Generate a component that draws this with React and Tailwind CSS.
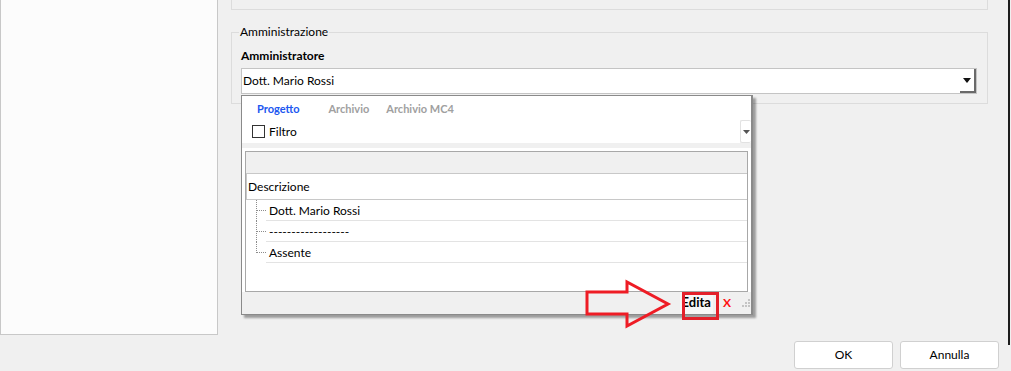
import React from 'react';

const rows = ['Dott. Mario Rossi', '------------------', 'Assente'];

function TreeLink({ last }) {
  return (
    <svg width="20" height="21" className="shrink-0">
      <line x1="10.5" y1="0" x2="10.5" y2={last ? 11 : 21} stroke="#8c8c8c" strokeDasharray="1 1" />
      <line x1="11" y1="10.5" x2="20" y2="10.5" stroke="#8c8c8c" strokeDasharray="1 1" />
    </svg>
  );
}

function DropdownPopup() {
  return (
    <div className="absolute left-[241px] top-[95px] flex h-[220px] w-[512px] flex-col border border-r-2 border-[#8a8a8a] bg-white shadow-[3px_3px_2px_rgba(0,0,0,0.35)]">
      {/* tabs + filter */}
      <div className="flex h-[47px] flex-col">
        <div className="flex h-[24px] items-center gap-[29px] pl-[15px] pt-[3px] text-[11px] font-bold">
          <span className="text-[#2057f0]">Progetto</span>
          <span className="flex gap-[17px] text-[#a0a0a0]">
            <span>Archivio</span>
            <span>Archivio MC4</span>
          </span>
        </div>
        <div className="flex flex-1 items-stretch">
          <div className="flex flex-1 items-center gap-[4px] pl-[10px]">
            <span className="h-[13px] w-[13px] border border-[#333] bg-white" />
            <span className="text-[12px]">Filtro</span>
          </div>
          <div className="flex w-[11px] items-center justify-center rounded-[2px] border border-r-0 border-[#e2e2e2]">
            <svg width="7" height="4" viewBox="0 0 7 4">
              <polygon points="0,0 7,0 3.5,4" fill="#555" />
            </svg>
          </div>
        </div>
      </div>
      <div className="h-[5px] bg-[#f0f0f0]" />
      {/* grid */}
      <div className="flex flex-1 flex-col bg-white px-[3px] pt-[3px]">
        <div className="flex flex-1 flex-col border border-[#a8a8a8]">
          <div className="h-[22px] border-b border-[#c8c8c8] bg-[#f0f0f0]" />
          <div className="flex h-[26px] items-center border-b border-l border-[#c8c8c8] pl-[1px] text-[12px]">
            Descrizione
          </div>
          {rows.map((r, i) => (
            <div key={i} className="flex h-[21px]">
              <TreeLink last={i === rows.length - 1} />
              <div className="flex flex-1 items-center border-b border-[#e3e3e3] pl-[3px] pt-[1px] text-[12px]">{r}</div>
            </div>
          ))}
        </div>
      </div>
      {/* footer */}
      <div className="flex h-[22px] items-center justify-end bg-[#f0f0f0]">
        <span className="flex h-[22px] items-center bg-[#f7f7f7] px-[2px] text-[13px] font-bold">Edita</span>
        <span className="ml-[10px] text-[12px] font-bold text-[#ff1010]">X</span>
        <svg width="9" height="9" className="ml-[11px]" viewBox="0 0 9 9">
          {[[6, 0], [3, 3], [6, 3], [0, 6], [3, 6], [6, 6]].map(([x, y], i) => (
            <rect key={i} x={x} y={y} width="2" height="2" fill="#c4c4c4" />
          ))}
        </svg>
      </div>
    </div>
  );
}

export default function App() {
  return (
    <div className="relative flex h-[371px] w-[1011px] items-start overflow-hidden bg-[#f0f0f0] font-['Lato',sans-serif] text-[12px] text-black">
      <div className="h-[335px] w-[218px] shrink-0 border border-t-0 border-[#c8c8c8] bg-[#fcfcfc]" />

      <div className="flex flex-1 flex-col self-stretch">
        <div className="ml-[13px] mr-[20px] h-[10px] border border-t-0 border-[#dcdcdc]" />

        <fieldset className="ml-[13px] mr-[20px] mt-[15px] h-[79px] border border-[#dcdcdc] px-[9px]">
          <legend className="-ml-[2px] px-[1px] leading-[14px]">Amministrazione</legend>
          <div className="mt-[9px] text-[12px] font-bold leading-[16px]">Amministratore</div>
          <div className="mr-[1px] mt-[4px] flex h-[26px] border border-[#c4c4c4] bg-white">
            <div className="flex flex-1 items-center pl-[1px]">Dott. Mario Rossi</div>
            <div className="flex w-[16px] items-center justify-center border-b-2 border-r-2 border-[#6a6a6a]">
              <svg width="8" height="5" viewBox="0 0 8 5">
                <polygon points="0,0 8,0 4,5" fill="#111" />
              </svg>
            </div>
          </div>
        </fieldset>

        <div className="mt-auto flex justify-end gap-[7px] pb-[2px] pr-[9px]">
          <button className="h-[28px] w-[99px] rounded-[3px] border border-[#d0d0d0] bg-white text-[12px]">OK</button>
          <button className="h-[28px] w-[99px] rounded-[3px] border border-[#d0d0d0] bg-white text-[12px]">Annulla</button>
        </div>
      </div>

      <div className="h-[345px] w-[2px] shrink-0 bg-[#1c1c1c]" />
      <div className="w-[1px] shrink-0" />

      <DropdownPopup />

      {/* annotation */}
      <svg className="absolute left-[585px] top-[279px]" width="100" height="50" viewBox="0 0 100 50">
        <polygon
          points="2,13 42,13 42,3 83,25 42,47 42,35 2,35"
          fill="none"
          stroke="#ee1c25"
          strokeWidth="3"
        />
      </svg>
      <div className="absolute left-[682px] top-[292px] h-[28px] w-[37px] border-[3px] border-[#e3202a]" />
    </div>
  );
}
